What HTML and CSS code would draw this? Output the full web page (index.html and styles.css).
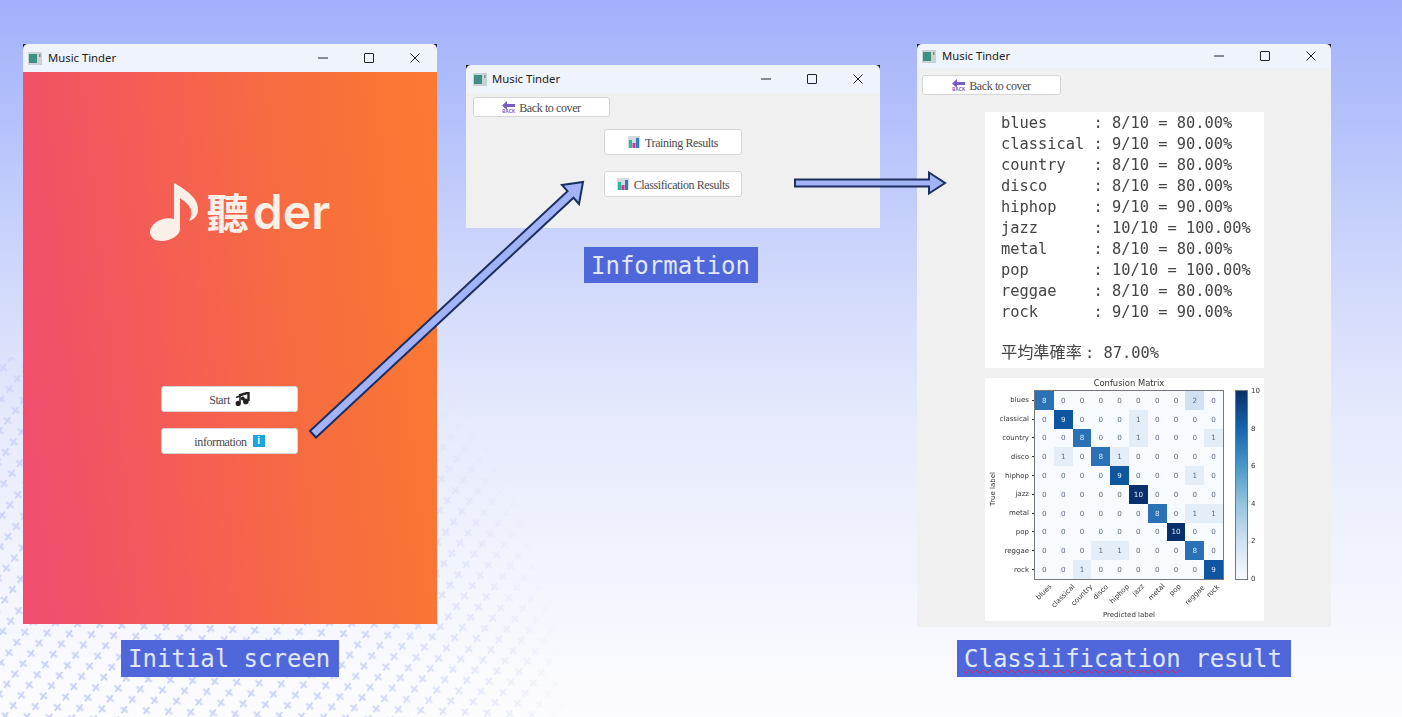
FILE: index.html
```html
<html>
<head>
<meta charset="utf-8">
<title>Music Tinder</title>
<link rel="stylesheet" href="styles.css">
</head>
<body>
<div id="slide">

    <svg class="dots" width="600" height="360" viewBox="0 0 600 360">
        <defs>
            <pattern id="crosses" width="13" height="18" patternUnits="userSpaceOnUse" patternTransform="rotate(-52)">
                <path d="M2 9H11M6.5 4.5V13.5" stroke="#c9d2f7" stroke-width="2"/>
            </pattern>
            <radialGradient id="fade" gradientUnits="userSpaceOnUse" cx="60" cy="360" r="510">
                <stop offset="0" stop-color="#fff"/>
                <stop offset="0.6" stop-color="#fff" stop-opacity="0.9"/>
                <stop offset="0.85" stop-color="#fff" stop-opacity="0.4"/>
                <stop offset="1" stop-color="#fff" stop-opacity="0"/>
            </radialGradient>
            <mask id="fademask">
                <rect width="600" height="360" fill="url(#fade)"/>
            </mask>
        </defs>
        <rect width="600" height="360" fill="url(#crosses)" mask="url(#fademask)"/>
    </svg>

    <!-- cover window -->
    <div class="window win-cover">
        <div class="titlebar">
            <svg class="appicon" width="14" height="13" viewBox="0 0 14 13"><rect width="14" height="13" fill="#c9d3d3"/><rect x="1" y="2" width="8" height="9" fill="#3f8f85"/><rect x="11" y="2" width="1.5" height="3" fill="#7d8f90"/></svg>
            <span class="wintitle">Music Tinder</span>
            <span class="ctrl"><svg width="10" height="10" viewBox="0 0 10 10"><path d="M0 5H10" stroke="#222"/></svg></span>
            <span class="ctrl"><svg width="10" height="10" viewBox="0 0 10 10"><rect x="0.5" y="0.5" width="9" height="9" rx="0.5" fill="none" stroke="#222"/></svg></span>
            <span class="ctrl"><svg width="10" height="10" viewBox="0 0 10 10"><path d="M0.5 0.5L9.5 9.5M9.5 0.5L0.5 9.5" stroke="#222"/></svg></span>
        </div>
        <div class="cover">
            <div class="logo">
                <svg class="note" width="49" height="58" viewBox="0 0 49 58"><path d="M24 1C24 0 25 0 26 1C36 7 48 15 48 26C48 32 45 36 39 38C41 34 42 31 41 27C40 22 34 18 30 15V46C30 52 21 58 11 58C4 58 0 54 0 49C0 41 12 33 24 36Z" fill="#faf0e8"/></svg>
                <span class="logo-han">聽</span><span class="logo-der">der</span>
            </div>
            <div class="cover-btns">
                <button class="btn btn-start">Start
                    <svg width="15" height="14" viewBox="0 0 15 14"><path d="M4 3.5L13.5 0.5V9" fill="none" stroke="#222" stroke-width="2.4"/><path d="M1 5.5L5 4V11" fill="none" stroke="#222" stroke-width="1.6"/><circle cx="3.2" cy="11.4" r="2.6" fill="#222"/><circle cx="10.8" cy="9.4" r="2.8" fill="#222"/><circle cx="7.8" cy="6.4" r="2" fill="#222"/></svg>
                </button>
                <button class="btn">information <span class="info">i</span></button>
            </div>
        </div>
    </div>
    <div class="caption cap-cover">Initial screen</div>

    <!-- information window -->
    <div class="window win-info">
        <div class="titlebar">
            <svg class="appicon" width="14" height="13" viewBox="0 0 14 13"><rect width="14" height="13" fill="#c9d3d3"/><rect x="1" y="2" width="8" height="9" fill="#3f8f85"/><rect x="11" y="2" width="1.5" height="3" fill="#7d8f90"/></svg>
            <span class="wintitle">Music Tinder</span>
            <span class="ctrl"><svg width="10" height="10" viewBox="0 0 10 10"><path d="M0 5H10" stroke="#222"/></svg></span>
            <span class="ctrl"><svg width="10" height="10" viewBox="0 0 10 10"><rect x="0.5" y="0.5" width="9" height="9" rx="0.5" fill="none" stroke="#222"/></svg></span>
            <span class="ctrl"><svg width="10" height="10" viewBox="0 0 10 10"><path d="M0.5 0.5L9.5 9.5M9.5 0.5L0.5 9.5" stroke="#222"/></svg></span>
        </div>
        <div class="panel">
            <button class="btn btn-back">
                <span class="backicon"><svg width="13" height="9" viewBox="0 0 13 9"><path d="M0 4.5L5 0V3H13V6H5V9Z" fill="#7a5cc6"/></svg><span class="backword">BACK</span></span>
                Back to cover
            </button>
            <div class="info-btns">
                <button class="btn btn-wide">
                    <svg width="12" height="12" viewBox="0 0 12 12"><rect width="12" height="12" fill="#d5dadd"/><rect x="1" y="4" width="3" height="8" fill="#28b8a0"/><rect x="4.5" y="7" width="3" height="5" fill="#e0338a"/><rect x="8" y="2" width="3" height="10" fill="#2a7ec8"/></svg>
                    Training Results
                </button>
                <button class="btn btn-wide">
                    <svg width="12" height="12" viewBox="0 0 12 12"><rect width="12" height="12" fill="#d5dadd"/><rect x="1" y="4" width="3" height="8" fill="#28b8a0"/><rect x="4.5" y="7" width="3" height="5" fill="#e0338a"/><rect x="8" y="2" width="3" height="10" fill="#2a7ec8"/></svg>
                    Classification Results
                </button>
            </div>
        </div>
    </div>
    <div class="caption cap-info">Information</div>

    <!-- results window -->
    <div class="window win-result">
        <div class="titlebar">
            <svg class="appicon" width="14" height="13" viewBox="0 0 14 13"><rect width="14" height="13" fill="#c9d3d3"/><rect x="1" y="2" width="8" height="9" fill="#3f8f85"/><rect x="11" y="2" width="1.5" height="3" fill="#7d8f90"/></svg>
            <span class="wintitle">Music Tinder</span>
            <span class="ctrl"><svg width="10" height="10" viewBox="0 0 10 10"><path d="M0 5H10" stroke="#222"/></svg></span>
            <span class="ctrl"><svg width="10" height="10" viewBox="0 0 10 10"><rect x="0.5" y="0.5" width="9" height="9" rx="0.5" fill="none" stroke="#222"/></svg></span>
            <span class="ctrl"><svg width="10" height="10" viewBox="0 0 10 10"><path d="M0.5 0.5L9.5 9.5M9.5 0.5L0.5 9.5" stroke="#222"/></svg></span>
        </div>
        <div class="panel panel-result">
            <button class="btn btn-back">
                <span class="backicon"><svg width="13" height="9" viewBox="0 0 13 9"><path d="M0 4.5L5 0V3H13V6H5V9Z" fill="#7a5cc6"/></svg><span class="backword">BACK</span></span>
                Back to cover
            </button>
            <div class="scores">
<pre class="score-list">blues     : 8/10 = 80.00%
classical : 9/10 = 90.00%
country   : 8/10 = 80.00%
disco     : 8/10 = 80.00%
hiphop    : 9/10 = 90.00%
jazz      : 10/10 = 100.00%
metal     : 8/10 = 80.00%
pop       : 10/10 = 100.00%
reggae    : 8/10 = 80.00%
rock      : 9/10 = 90.00%</pre>
                <div class="average"><span class="average-name">平均準確率</span>: 87.00%</div>
            </div>
            <div class="chart">
                <div class="ylabel">True label</div>
                <div class="chart-title">Confusion Matrix</div>
                <div class="rows">
                    <span>blues</span><span>classical</span><span>country</span><span>disco</span><span>hiphop</span><span>jazz</span><span>metal</span><span>pop</span><span>reggae</span><span>rock</span>
                </div>
                <div class="matrix">
                    <span class="v8">8</span><span>0</span><span>0</span><span>0</span><span>0</span><span>0</span><span>0</span><span>0</span><span class="v2">2</span><span>0</span>
                    <span>0</span><span class="v9">9</span><span>0</span><span>0</span><span>0</span><span class="v1">1</span><span>0</span><span>0</span><span>0</span><span>0</span>
                    <span>0</span><span>0</span><span class="v8">8</span><span>0</span><span>0</span><span class="v1">1</span><span>0</span><span>0</span><span>0</span><span class="v1">1</span>
                    <span>0</span><span class="v1">1</span><span>0</span><span class="v8">8</span><span class="v1">1</span><span>0</span><span>0</span><span>0</span><span>0</span><span>0</span>
                    <span>0</span><span>0</span><span>0</span><span>0</span><span class="v9">9</span><span>0</span><span>0</span><span>0</span><span class="v1">1</span><span>0</span>
                    <span>0</span><span>0</span><span>0</span><span>0</span><span>0</span><span class="v10">10</span><span>0</span><span>0</span><span>0</span><span>0</span>
                    <span>0</span><span>0</span><span>0</span><span>0</span><span>0</span><span>0</span><span class="v8">8</span><span>0</span><span class="v1">1</span><span class="v1">1</span>
                    <span>0</span><span>0</span><span>0</span><span>0</span><span>0</span><span>0</span><span>0</span><span class="v10">10</span><span>0</span><span>0</span>
                    <span>0</span><span>0</span><span>0</span><span class="v1">1</span><span class="v1">1</span><span>0</span><span>0</span><span>0</span><span class="v8">8</span><span>0</span>
                    <span>0</span><span>0</span><span class="v1">1</span><span>0</span><span>0</span><span>0</span><span>0</span><span>0</span><span>0</span><span class="v9">9</span>
                </div>
                <div class="colorbar"></div>
                <div class="barticks">
                    <span>10</span><span>8</span><span>6</span><span>4</span><span>2</span><span>0</span>
                </div>
                <div class="cols">
                    <div><span style="margin-top:9px">blues</span></div>
                    <div><span style="margin-top:13px">classical</span></div>
                    <div><span style="margin-top:12px">country</span></div>
                    <div><span style="margin-top:9px">disco</span></div>
                    <div><span style="margin-top:11px">hiphop</span></div>
                    <div><span style="margin-top:7px">jazz</span></div>
                    <div><span style="margin-top:9px">metal</span></div>
                    <div><span style="margin-top:7px">pop</span></div>
                    <div><span style="margin-top:12px">reggae</span></div>
                    <div><span style="margin-top:8px">rock</span></div>
                </div>
                <div class="xlabel">Predicted label</div>
            </div>
        </div>
    </div>
    <div class="caption cap-result"><span class="typo">Classiification</span> result</div>

    <!-- arrows between the windows -->
    <svg class="arrows" width="1402" height="717" viewBox="0 0 1402 717">
        <path d="M310 431L567.5 191.2L562 185L583 182L579 204L573.5 197.8L316 437.5Z" fill="#a3b3f8" stroke="#1c2f5e" stroke-width="2"/>
        <path d="M795 179.5H929V172.5L945 183L929 193.5V186.5H795Z" fill="#a3b3f8" stroke="#1c2f5e" stroke-width="2"/>
    </svg>
</div>
</body>
</html>
```

FILE: styles.css
```css
body {
    margin: 0;
    background: #fff;
}

#slide {
    position: relative;
    width: 1402px;
    height: 717px;
    overflow: hidden;
    background: linear-gradient(#a2b1fb 0, #b6c2fb 130px, #cfd8fb 270px, #e6eafc 420px, #f6f7fe 620px, #fcfcff 717px);
}

.dots {
    position: absolute;
    left: 0;
    top: 357px;
}

.arrows {
    position: absolute;
    left: 0;
    top: 0;
}

/* windows sit on the slide like on a desktop */
.window {
    position: absolute;
    width: 414px;
    display: flex;
    flex-direction: column;
    background: linear-gradient(#1c2230 0, #1c2230 8px, transparent 8px);
}

.win-cover {
    left: 23px;
    top: 44px;
    height: 580px;
}

.win-info {
    left: 466px;
    top: 65px;
    height: 163px;
}

.win-result {
    left: 917px;
    top: 44px;
    height: 583px;
}

.titlebar {
    display: flex;
    align-items: center;
    height: 28px;
    flex-shrink: 0;
    padding-left: 5px;
    background: #eff3fb;
    border-radius: 5px 5px 0 0;
}

.win-info .titlebar {
    padding-left: 7px;
}

.win-result .titlebar {
    height: 24px;
}

.appicon {
    margin-right: 6px;
}

.win-info .appicon {
    margin-right: 5px;
}

.wintitle {
    flex-grow: 1;
    margin-top: -2px;
    font-family: "Noto Sans", sans-serif;
    font-size: 11.3px;
    color: #222;
}

.ctrl {
    width: 46px;
    display: flex;
    justify-content: center;
}

.ctrl:last-child {
    margin-right: -1px;
}

.win-result .ctrl:last-child {
    margin-right: -3px;
}

.cover {
    flex-grow: 1;
    display: flex;
    flex-direction: column;
    align-items: center;
    background: linear-gradient(84deg, #f14c70 0, #f35a5a 30%, #f76c40 65%, #fb7a30 100%);
}

.logo {
    display: flex;
    align-items: flex-end;
    margin: 111px 0 0 20px;
    height: 58px;
    color: #faf0e8;
}

.note {
    margin-right: 8px;
}

.logo-han {
    font-family: "Noto Sans CJK TC", sans-serif;
    font-weight: 700;
    font-size: 42px;
    line-height: 60px;
}

.logo-der {
    font-family: Inter, sans-serif;
    font-weight: 600;
    font-size: 48px;
    line-height: 58px;
    margin-left: 4px;
}

.cover-btns {
    display: flex;
    flex-direction: column;
    gap: 16px;
    margin: 145px 1px 0 0;
}

.btn {
    display: flex;
    align-items: center;
    justify-content: center;
    gap: 5px;
    width: 137px;
    height: 26px;
    padding: 2px 0 0;
    background: #fff;
    border: 1px solid #d6d6d6;
    border-radius: 3px;
    font-family: "Liberation Serif", serif;
    font-size: 12px;
    letter-spacing: -0.4px;
    color: #4a4a4a;
}

.btn svg, .info {
    margin-top: -2px;
}

.btn-wide {
    width: 138px;
}

.info {
    display: inline-block;
    width: 12px;
    height: 12px;
    margin-left: 1px;
    background: #1ba3e2;
    color: #fff;
    font-family: "Liberation Sans", sans-serif;
    font-weight: 700;
    font-size: 10px;
    line-height: 12px;
    letter-spacing: 0;
    text-align: center;
}

.panel {
    flex-grow: 1;
    background: #f0f0f0;
    padding: 4px 7px 0;
}

.panel-result {
    padding-left: 5px;
    padding-top: 7px;
}

.btn-back {
    height: 20px;
    gap: 4px;
}

.panel-result .btn-back {
    width: 139px;
}

.backicon {
    display: flex;
    flex-direction: column;
    align-items: center;
}

.backword {
    font-family: "Liberation Sans", sans-serif;
    font-size: 4.5px;
    font-weight: 700;
    line-height: 5px;
    letter-spacing: 0;
    margin-top: -1px;
    color: #7a5cc6;
}

.info-btns {
    display: flex;
    flex-direction: column;
    align-items: center;
    gap: 16px;
    margin-top: 12px;
}

.scores {
    width: 279px;
    height: 256px;
    margin: 17px 0 0 63px;
    padding: 1px 0 0 16px;
    box-sizing: border-box;
    background: #fff;
    color: #444;
    filter: blur(0.3px);
}

.score-list {
    margin: 0;
    font-family: "DejaVu Sans Mono", monospace;
    font-size: 15.36px;
    line-height: 21px;
}

.average {
    margin-top: 17px;
    font-family: "DejaVu Sans Mono", "Noto Sans CJK TC", monospace;
    font-size: 15.36px;
    line-height: 22px;
}

.average-name {
    font-family: "Noto Sans CJK TC", sans-serif;
    font-size: 16.2px;
    margin-right: 3px;
}

/* confusion matrix */
.chart {
    position: relative;
    display: grid;
    grid-template-columns: 50px 188px 13px 11px 1fr;
    grid-template-rows: 13px 188px 32px 1fr;
    width: 279px;
    height: 243px;
    margin: 10px 0 0 63px;
    background: #fff;
    font-family: "DejaVu Sans", sans-serif;
    font-size: 7px;
    color: #333;
    filter: blur(0.25px);
}

.chart-title {
    grid-column: 2;
    grid-row: 1;
    text-align: center;
    font-size: 8.4px;
    line-height: 11px;
}

.ylabel {
    position: absolute;
    left: -12px;
    top: 107px;
    width: 40px;
    text-align: center;
    transform: rotate(-90deg);
    font-size: 7px;
}

.rows {
    grid-column: 1;
    grid-row: 2;
    display: grid;
    grid-template-rows: repeat(10, 1fr);
}

.rows span {
    display: flex;
    align-items: center;
    justify-content: flex-end;
    padding-right: 6px;
    background: linear-gradient(#333, #333) right center / 3px 1px no-repeat;
}

.matrix {
    grid-column: 2;
    grid-row: 2;
    display: grid;
    grid-template-columns: repeat(10, 1fr);
    grid-template-rows: repeat(10, 1fr);
    background: #f7fbff;
    outline: 1px solid #777;
    font-size: 7.2px;
    color: #5a6a80;
}

.matrix span {
    display: flex;
    align-items: center;
    justify-content: center;
}

.v1 {
    background: #e3eef9;
}

.v2 {
    background: #cfe1f2;
}

.matrix .v8 {
    background: #2a72b5;
    color: #dfeaf6;
}

.matrix .v9 {
    background: #0e56a0;
    color: #dfeaf6;
}

.matrix .v10 {
    background: #08306b;
    color: #dfeaf6;
}

.colorbar {
    grid-column: 4;
    grid-row: 2;
    background: linear-gradient(#08306b, #1764ab 20%, #4a98c9 40%, #94c4df 60%, #cfe1f2 80%, #f7fbff);
    outline: 1px solid #777;
}

.barticks {
    grid-column: 5;
    grid-row: 2;
    display: flex;
    flex-direction: column;
    justify-content: space-between;
    padding-left: 4px;
    line-height: 0;
}

.cols {
    grid-column: 2;
    grid-row: 3;
    display: grid;
    grid-template-columns: repeat(10, minmax(0, 1fr));
}

.cols div {
    display: flex;
    justify-content: center;
    min-width: 0;
}

.cols span {
    flex-shrink: 0;
    height: 9px;
    line-height: 9px;
    transform: rotate(-45deg);
}

.xlabel {
    grid-column: 2;
    grid-row: 4;
    text-align: center;
}

/* captions */
.caption {
    position: absolute;
    box-sizing: border-box;
    height: 37px;
    padding-left: 7px;
    background: #4f67da;
    color: #e2e8fb;
    font-family: "DejaVu Sans Mono", monospace;
    font-size: 24px;
    line-height: 39px;
    white-space: pre;
}

.cap-cover {
    left: 121px;
    top: 640px;
    width: 218px;
}

.cap-info {
    left: 584px;
    top: 247px;
    width: 174px;
    height: 36px;
    line-height: 38px;
}

.cap-result {
    left: 957px;
    top: 640px;
    width: 334px;
}

.typo {
    text-decoration: underline wavy #d0245e 1.2px;
    text-decoration-skip-ink: none;
    text-underline-offset: 2px;
}
```
